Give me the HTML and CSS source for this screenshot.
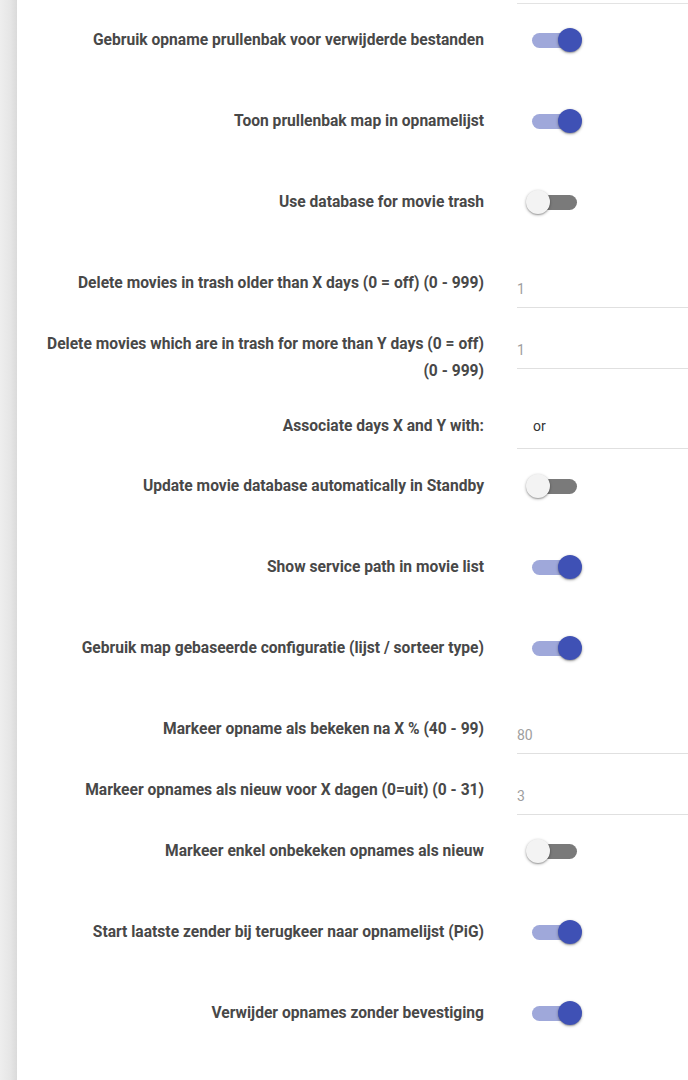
FILE: index.html
```html
<!DOCTYPE html>
<html lang="nl">
<head>
<meta charset="utf-8">
<title>Instellingen</title>
<link rel="stylesheet" href="styles.css">
</head>
<body>
<div class="page">
  <div class="sidebar"></div>
  <div class="content">
    <div class="row top-row">
      <div class="label"></div>
      <div class="control"><div class="field-end"></div></div>
    </div>

    <div class="row toggle-row">
      <div class="label">Gebruik opname prullenbak voor verwijderde bestanden</div>
      <div class="control"><div class="switch on"><span class="track"></span><span class="knob"></span></div></div>
    </div>
    <div class="row toggle-row">
      <div class="label">Toon prullenbak map in opnamelijst</div>
      <div class="control"><div class="switch on"><span class="track"></span><span class="knob"></span></div></div>
    </div>
    <div class="row toggle-row">
      <div class="label">Use database for movie trash</div>
      <div class="control"><div class="switch off"><span class="track"></span><span class="knob"></span></div></div>
    </div>
    <div class="row input-row">
      <div class="label">Delete movies in trash older than X days (0 = off) (0 - 999)</div>
      <div class="control"><div class="field">1</div></div>
    </div>
    <div class="row input-row">
      <div class="label">Delete movies which are in trash for more than Y days (0 = off) <span class="nowrap">(0 - 999)</span></div>
      <div class="control"><div class="field">1</div></div>
    </div>
    <div class="row select-row">
      <div class="label">Associate days X and Y with:</div>
      <div class="control"><div class="select">or</div></div>
    </div>
    <div class="row toggle-row">
      <div class="label">Update movie database automatically in Standby</div>
      <div class="control"><div class="switch off"><span class="track"></span><span class="knob"></span></div></div>
    </div>
    <div class="row toggle-row">
      <div class="label">Show service path in movie list</div>
      <div class="control"><div class="switch on"><span class="track"></span><span class="knob"></span></div></div>
    </div>
    <div class="row toggle-row">
      <div class="label">Gebruik map gebaseerde configuratie (lijst / sorteer type)</div>
      <div class="control"><div class="switch on"><span class="track"></span><span class="knob"></span></div></div>
    </div>
    <div class="row input-row">
      <div class="label">Markeer opname als bekeken na X % (40 - 99)</div>
      <div class="control"><div class="field">80</div></div>
    </div>
    <div class="row input-row">
      <div class="label">Markeer opnames als nieuw voor X dagen (0=uit) (0 - 31)</div>
      <div class="control"><div class="field">3</div></div>
    </div>
    <div class="row toggle-row">
      <div class="label">Markeer enkel onbekeken opnames als nieuw</div>
      <div class="control"><div class="switch off"><span class="track"></span><span class="knob"></span></div></div>
    </div>
    <div class="row toggle-row">
      <div class="label">Start laatste zender bij terugkeer naar opnamelijst (PiG)</div>
      <div class="control"><div class="switch on"><span class="track"></span><span class="knob"></span></div></div>
    </div>
    <div class="row toggle-row">
      <div class="label">Verwijder opnames zonder bevestiging</div>
      <div class="control"><div class="switch on"><span class="track"></span><span class="knob"></span></div></div>
    </div>
  </div>
</div>
</body>
</html>
```
FILE: styles.css
```css
html, body {
  margin: 0;
  padding: 0;
  background: #ffffff;
}
body {
  font-family: Roboto, "Liberation Sans", sans-serif;
  overflow: hidden;
}
.page {
  display: flex;
  min-height: 1080px;
}
.sidebar {
  width: 17px;
  flex: none;
  background: linear-gradient(to right, #eeeeee 0%, #e6e6e6 60%, #dadada 100%);
}
.content {
  flex: 1;
  min-width: 0;
}
.row {
  display: flex;
  align-items: flex-start;
}
.label {
  width: 467px;
  flex: none;
  box-sizing: border-box;
  padding: 23px 0 5px 0;
  text-align: right;
  font-size: 15.6px;
  font-weight: 700;
  line-height: 27px;
  color: #484848;
}
.nowrap {
  white-space: nowrap;
}
.top-row .label {
  padding: 0;
}
.control {
  flex: 1;
  margin-left: 33px;
}
.field-end {
  height: 3px;
  border-bottom: 1px solid #e3e3e3;
}
.toggle-row .control {
  height: 81px;
}
.switch {
  position: relative;
  width: 56px;
  height: 24px;
  margin: 24px 0 0 9px;
}
.track {
  position: absolute;
  left: 6px;
  top: 5px;
  width: 45px;
  height: 15px;
  border-radius: 8px;
}
.knob {
  position: absolute;
  top: 0;
  left: 0;
  width: 24px;
  height: 24px;
  border-radius: 50%;
  box-shadow: 0 1px 3px rgba(0, 0, 0, 0.35), 0 1px 1px rgba(0, 0, 0, 0.15);
}
.switch.on .track {
  background: #9fa8da;
}
.switch.on .knob {
  left: 32px;
  background: #3f51b5;
}
.switch.off .track {
  background: #7a7a7a;
}
.switch.off .knob {
  background: #f3f3f3;
}
.field {
  margin-top: 24px;
  height: 36px;
  line-height: 36px;
  font-size: 14px;
  color: #9e9e9e;
  border-bottom: 1px solid #e0e0e0;
}
.select-row .control {
  padding-bottom: 1px;
}
.select {
  margin-top: 14px;
  height: 44px;
  line-height: 44px;
  padding-left: 16px;
  font-size: 14px;
  color: #333333;
  border-bottom: 1px solid #e0e0e0;
}
```
